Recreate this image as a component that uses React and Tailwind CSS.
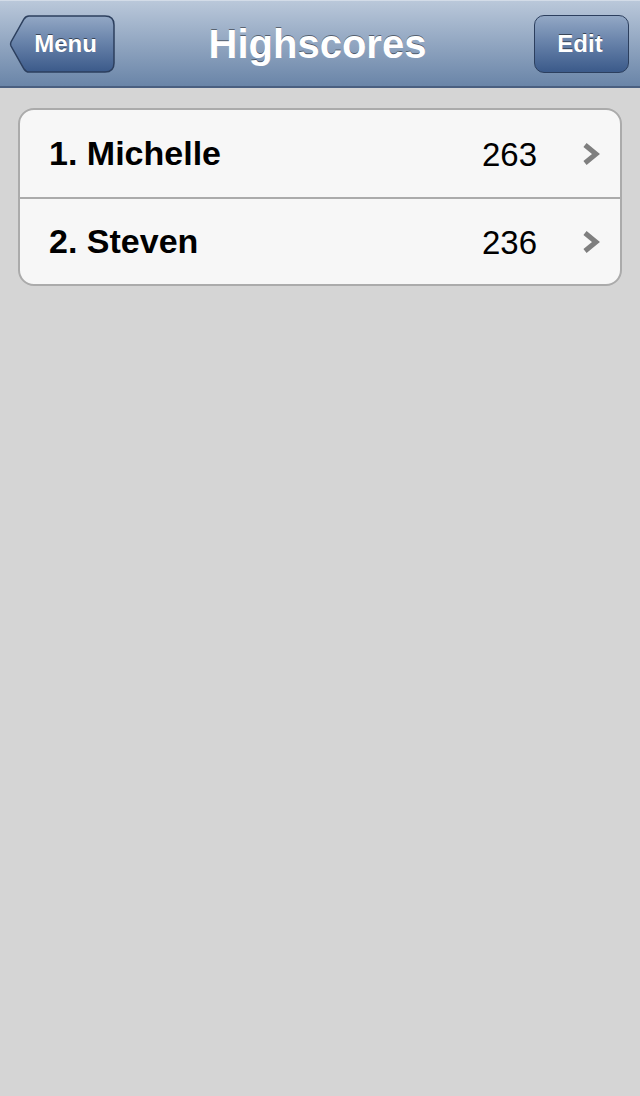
const font = { fontFamily: '"Liberation Sans", Arial, sans-serif' };

const scores = [
  { rank: 1, name: 'Michelle', score: 263 },
  { rank: 2, name: 'Steven', score: 236 },
];

function BackShape() {
  return (
    <svg className="absolute inset-0" width="106" height="58" viewBox="0 0 106 58">
      <defs>
        <linearGradient id="btn-back" x1="0" y1="0" x2="0" y2="1">
          <stop offset="0" stopColor="#93a8c5" />
          <stop offset="0.5" stopColor="#6580a8" />
          <stop offset="1" stopColor="#3b5a8a" />
        </linearGradient>
      </defs>
      <path
        d="M20 1 H96 Q105 1 105 10 V48 Q105 57 96 57 H20 Q17 57 15 54 L2 31 Q1 29 2 27 L15 4 Q17 1 20 1 Z"
        fill="url(#btn-back)"
        stroke="#2c3f5e"
        strokeWidth="1.5"
      />
    </svg>
  );
}

function Chevron() {
  return (
    <svg width="18" height="24" viewBox="0 0 18 24" className="shrink-0">
      <path d="M3 3 L14 12 L3 21" fill="none" stroke="#7f7f7f" strokeWidth="5" strokeLinejoin="miter" strokeLinecap="butt" />
    </svg>
  );
}

export default function App() {
  return (
    <div className="min-h-[1096px] w-[640px] bg-[#d5d5d5]" style={font}>
      {/* Navigation bar */}
      <div className="relative flex h-[88px] items-center justify-between border-t border-t-[#d3dce8] border-b-2 border-b-[#4a5f80] bg-gradient-to-b from-[#bac8da] to-[#6a85a8] px-[9px]">
        <button className="relative h-[58px] w-[106px]">
          <BackShape />
          <span className="relative ml-[7px] text-[24px] font-bold text-white [text-shadow:0_-1px_0_rgba(0,0,0,0.5)]">
            Menu
          </span>
        </button>
        <h1 className="pointer-events-none absolute left-0 right-0 pr-[5px] text-center text-[40px] font-bold text-white [text-shadow:0_-1px_0_rgba(0,0,0,0.45)]">
          Highscores
        </h1>
        <button className="mr-[2px] h-[58px] w-[95px] rounded-[10px] border-[1.5px] border-[#2c3f5e] bg-gradient-to-b from-[#93a8c5] via-[#6580a8] to-[#3b5a8a] pr-[3px] text-[24px] font-bold text-white [text-shadow:0_-1px_0_rgba(0,0,0,0.5)]">
          Edit
        </button>
      </div>

      {/* Score list */}
      <div className="px-[18px] pt-[20px]">
        <div className="overflow-hidden rounded-[16px] border-2 border-[#ababab] bg-[#f7f7f7]">
          {scores.map((s, i) => (
            <div
              key={s.rank}
              className={`flex h-[87px] items-center pl-[29px] pr-[20px] ${i > 0 ? 'border-t-2 border-t-[#ababab]' : ''}`}
            >
              <span className="flex-1 text-[34px] font-bold text-black">
                {s.rank}. {s.name}
              </span>
              <span className="mr-[45px] mt-[2px] text-[33px] text-black">{s.score}</span>
              <Chevron />
            </div>
          ))}
        </div>
      </div>
    </div>
  );
}
